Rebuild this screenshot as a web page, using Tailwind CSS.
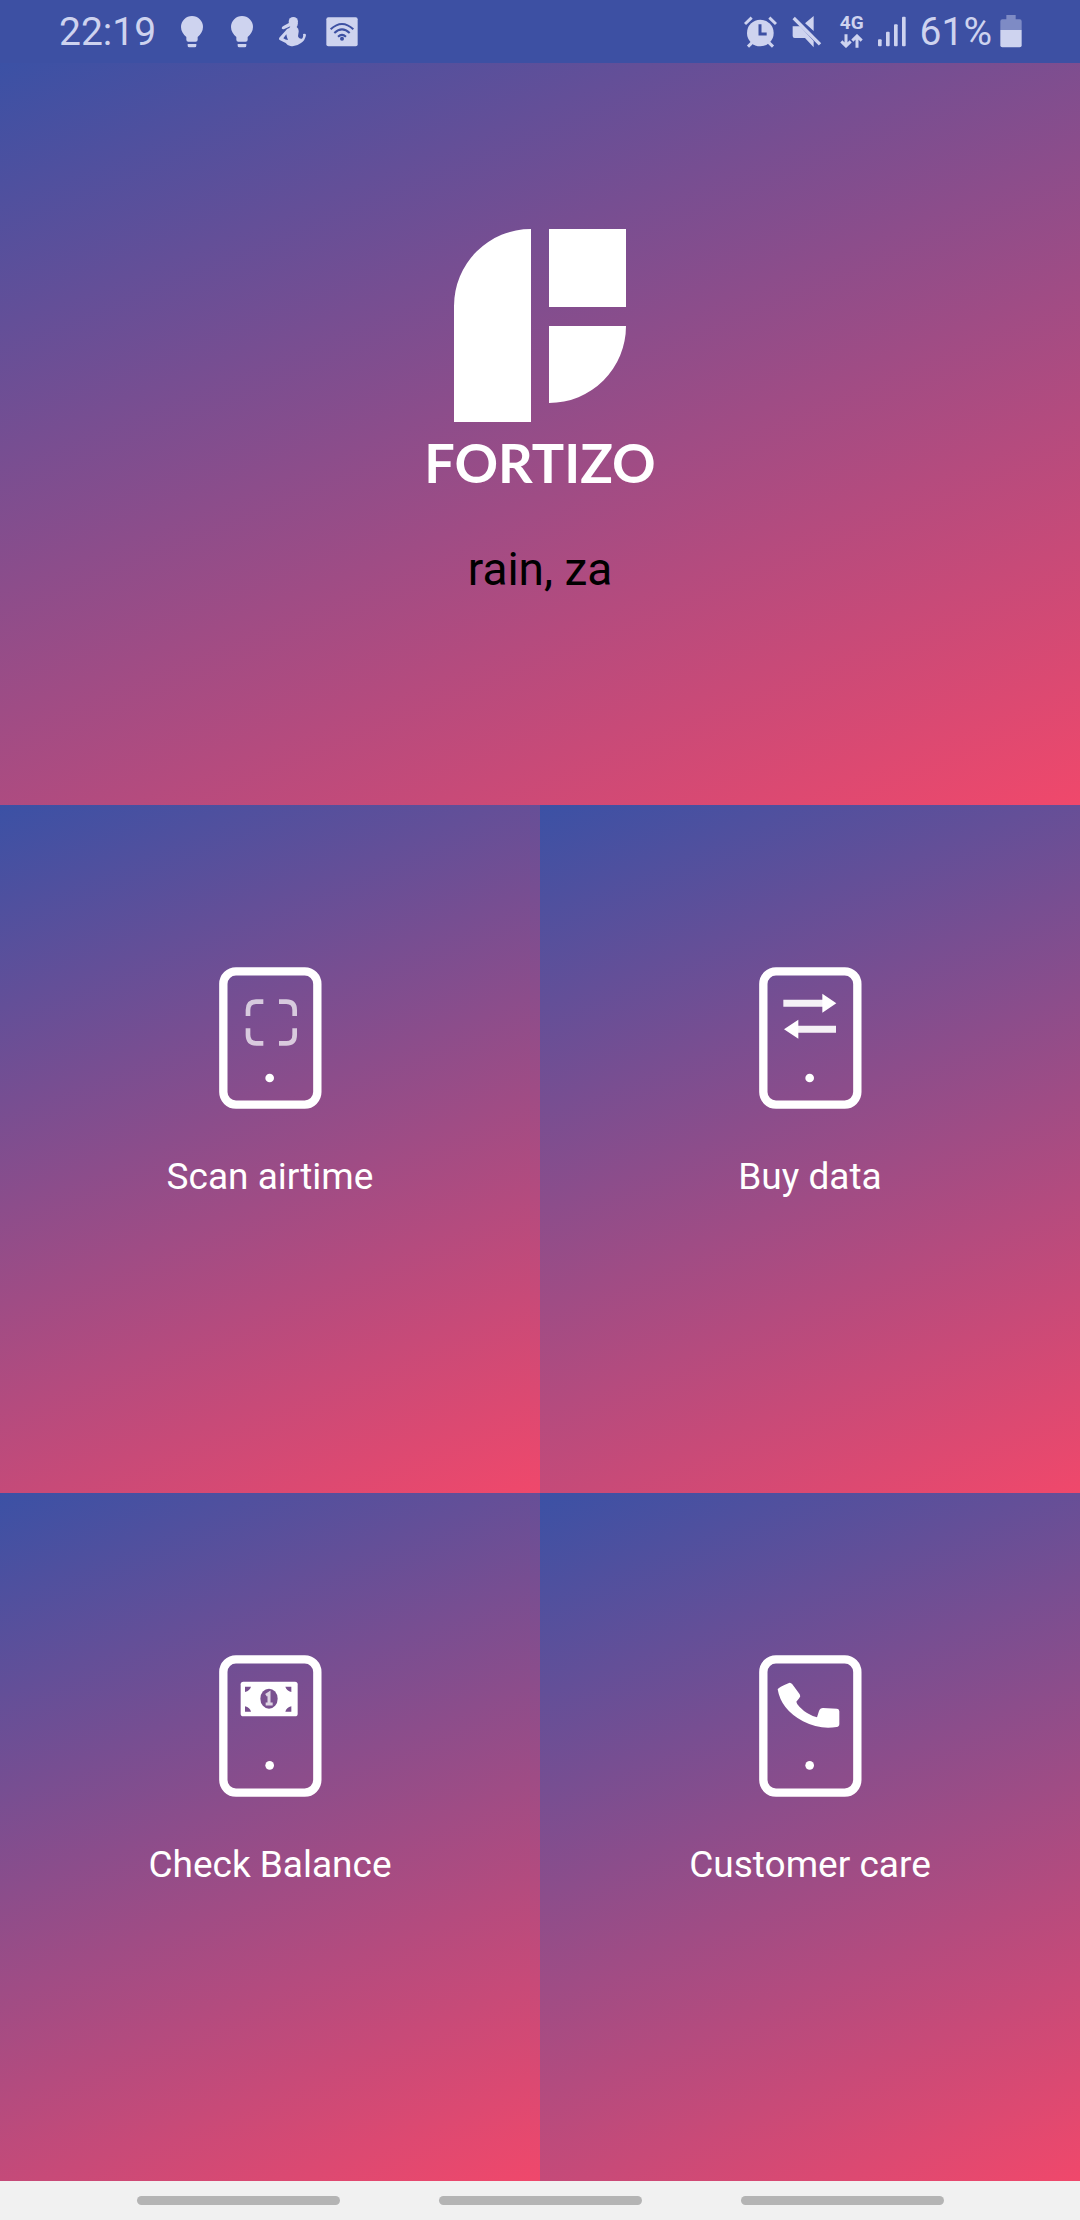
<!DOCTYPE html>
<html lang="en">
<head>
<meta charset="utf-8">
<meta name="viewport" content="width=device-width, initial-scale=1">
<title>Fortizo</title>
<script src="https://cdn.jsdelivr.net/npm/@tailwindcss/browser@4"></script>
</head>
<body class="flex min-h-screen flex-col bg-[#f1f1f1] font-[Roboto,sans-serif] text-white">

  <!-- Status bar -->
  <header class="flex h-[63px] items-center justify-between bg-[#3d50a3] pr-[58px] pl-[59px] text-[39px] leading-[46px] text-[#ced3ef]">
    <div class="flex items-center">
      <time>22:19</time>
      <svg class="ml-[25px] h-8 w-[22px]" viewBox="0 0 66 96" fill="currentColor" aria-label="Tip"><path d="M33 0a33 33 0 0 1 33 33c0 13-7 22-16 30v8q0 6-6 6H22q-6 0-6-6v-8C7 55 0 46 0 33A33 33 0 0 1 33 0zM20 84h26v5q0 5-5 5H25q-5 0-5-5z"/></svg>
      <svg class="ml-7 h-8 w-[22px]" viewBox="0 0 66 96" fill="currentColor" aria-label="Tip"><path d="M33 0a33 33 0 0 1 33 33c0 13-7 22-16 30v8q0 6-6 6H22q-6 0-6-6v-8C7 55 0 46 0 33A33 33 0 0 1 33 0zM20 84h26v5q0 5-5 5H25q-5 0-5-5z"/></svg>
      <svg class="ml-[26px] h-[30px] w-[27px]" viewBox="0 0 81 90" fill="currentColor" aria-label="Activity"><circle cx="43" cy="14" r="14"/><path d="M34 18h22q1 8-3 12 7 5 6 14l-2 14q2 9 12 7 5-6 3-14 8-3 9 3-2 15-15 24-15 12-32 9-9-2-14-9L2 69q-4-4 0-8l17-19q4-7 12-9l3-5-18 8q-6 2-8-2 0-4 5-7l18-10zM22 52 13 64q6 5 14 5-4-8-5-17z"/></svg>
      <svg class="ml-5 h-[30px] w-8" viewBox="0 0 96 90" aria-label="Wi-Fi available"><rect x="1" y="1" width="94" height="87" rx="6" fill="currentColor"/><g fill="none" stroke="#3d50a3" stroke-width="6"><path d="M14 37Q48 5 82 37M25 48Q48 26 71 48M36 59Q48 48 60 59"/></g><circle cx="48" cy="65" r="6" fill="#3d50a3"/></svg>
    </div>
    <div class="flex items-center">
      <svg class="h-8 w-[33px]" viewBox="0 0 99 96" aria-label="Alarm"><g fill="none" stroke="currentColor" stroke-width="9"><path d="M3 24 23 5M76 5 96 24"/><path d="M25 79 12 92M74 79 87 92"/></g><circle cx="49" cy="51" r="40" fill="currentColor"/><path d="M48 25v29h20" fill="none" stroke="#3d50a3" stroke-width="9"/></svg>
      <svg class="ml-[15px] h-8 w-[30px]" viewBox="0 0 90 96" fill="currentColor" aria-label="Muted"><path d="M65 0v45L39 22zM2 31h22l41 44v19L39 66H8q-6 0-6-6z"/><path d="M12 1 91 80" fill="none" stroke="#3d50a3" stroke-width="8"/><path d="M5 6 84 85" fill="none" stroke="currentColor" stroke-width="10"/></svg>
      <div class="ml-[18px] flex flex-col items-center gap-1">
        <span class="text-[19px] leading-[14px] font-bold">4G</span>
        <svg class="h-[14px] w-[23px]" viewBox="0 0 69 42" fill="none" stroke="currentColor" stroke-width="9" aria-label="Data transfer"><path d="M18 1v34M4 22l14 14 14-14M51 41V7M37 20 51 6l14 14"/></svg>
      </div>
      <svg class="ml-[14px] h-8 w-[28px]" viewBox="0 0 84 96" fill="currentColor" aria-label="Signal strength"><rect y="70" width="11" height="21" rx="3"/><rect x="24" y="47" width="11" height="44" rx="3"/><rect x="48" y="25" width="11" height="66" rx="3"/><rect x="72" y="2" width="11" height="89" rx="3"/></svg>
      <span class="ml-[14px]">61%</span>
      <svg class="ml-2 h-[33px] w-[22px]" viewBox="0 0 66 99" fill="currentColor" aria-label="Battery"><path opacity=".45" d="M19 0h28v13h12q6 0 6 6v26H1V19q0-6 6-6h12z"/><path d="M1 45h64v46q0 6-6 6H7q-6 0-6-6z"/></svg>
    </div>
  </header>

  <main class="flex grow flex-col">
    <section class="flex flex-col items-center bg-linear-[158deg,#3b51a5,#f0486b] px-4 pt-[166px] pb-[208px]">
      <svg class="h-[193px] w-[172px]" viewBox="0 0 172 193" fill="#fff" aria-hidden="true"><path d="M77 0v193H0V77A77 77 0 0 1 77 0zM95 0h77v78H95zM95 97h77a77 77 0 0 1-77 77z"/></svg>
      <h1 class="mt-[9px] font-[Lato,sans-serif] text-[54px] leading-[64px] font-bold">FORTIZO</h1>
      <p class="mt-[46px] text-[46px] leading-[56px] text-black">rain, za</p>
    </section>

    <nav class="grid grow auto-rows-fr grid-cols-2" aria-label="Services">
      <button class="flex flex-col items-center bg-linear-[158deg,#3b51a5,#f0486b] px-4 pt-[162px] pb-24">
        <svg class="h-[142px] w-[103px]" viewBox="0 0 309 426" fill="none" stroke="#fff" aria-hidden="true"><rect x="13" y="13" width="282" height="400" rx="38" stroke-width="25"/><circle cx="152" cy="333" r="13" fill="#fff" stroke="none"/><path d="M87 147v-18q0-25 25-25h21M180 104h22q25 0 25 25v18M87 184v19q0 26 25 26h21M180 229h22q25 0 25-26v-19" stroke-width="14" opacity=".7"/></svg>
        <span class="mt-11 text-[37px] leading-[48px]">Scan airtime</span>
      </button>
      <button class="flex flex-col items-center bg-linear-[158deg,#3b51a5,#f0486b] px-4 pt-[162px] pb-24">
        <svg class="h-[142px] w-[103px]" viewBox="0 0 309 426" fill="none" stroke="#fff" aria-hidden="true"><rect x="13" y="13" width="282" height="400" rx="38" stroke-width="25"/><circle cx="152" cy="333" r="13" fill="#fff" stroke="none"/><path d="M73 109h125M231 187H112" stroke-width="21" opacity=".92"/><path d="M190 80l42 29-42 28zM118 158 75 187l43 28z" fill="#fff" stroke="none"/></svg>
        <span class="mt-11 text-[37px] leading-[48px]">Buy data</span>
      </button>
      <button class="flex flex-col items-center bg-linear-[158deg,#3b51a5,#f0486b] px-4 pt-[162px] pb-24">
        <svg class="h-[142px] w-[103px]" viewBox="0 0 309 426" fill="none" stroke="#fff" aria-hidden="true"><rect x="13" y="13" width="282" height="400" rx="38" stroke-width="25"/><circle cx="152" cy="331" r="13" fill="#fff" stroke="none"/><rect x="65" y="80" width="171" height="104" rx="8" fill="#fff" stroke="none"/><g fill="#79508f" stroke="none"><ellipse cx="150" cy="131" rx="26" ry="30"/><path d="M78 95h18q-3 12-18 16zM217 95h-18q3 12 18 16zM78 170h18q-3-12-18-16zM217 170h-18q3-12 18-16z"/></g><path d="M141 121l9-6v30M140 147h21" stroke-width="9" opacity=".75"/></svg>
        <span class="mt-11 text-[37px] leading-[48px]">Check Balance</span>
      </button>
      <button class="flex flex-col items-center bg-linear-[158deg,#3b51a5,#f0486b] px-4 pt-[162px] pb-24">
        <svg class="h-[142px] w-[103px]" viewBox="0 0 309 426" fill="none" stroke="#fff" aria-hidden="true"><rect x="13" y="13" width="282" height="400" rx="38" stroke-width="25"/><circle cx="152" cy="331" r="13" fill="#fff" stroke="none"/><path d="M56 103q2-6 34-19 5-2 10 4l22 30q4 6-1 11l-9 11q1 8 10 16 22 23 52 31l6-19q3-9 12-9l42 2q7 1 7 8v38q0 8-8 9-50 9-101-17Q66 164 56 103z" fill="#fff" stroke="none"/></svg>
        <span class="mt-11 text-[37px] leading-[48px]">Customer care</span>
      </button>
    </nav>
  </main>

  <!-- System navigation hints -->
  <footer class="flex h-[39px] items-start justify-center gap-[99px] pt-[15px]">
    <span class="h-[9px] w-[203px] rounded-full bg-[#b4b4b4]"></span>
    <span class="h-[9px] w-[203px] rounded-full bg-[#b4b4b4]"></span>
    <span class="h-[9px] w-[203px] rounded-full bg-[#b4b4b4]"></span>
  </footer>
</body>
</html>
